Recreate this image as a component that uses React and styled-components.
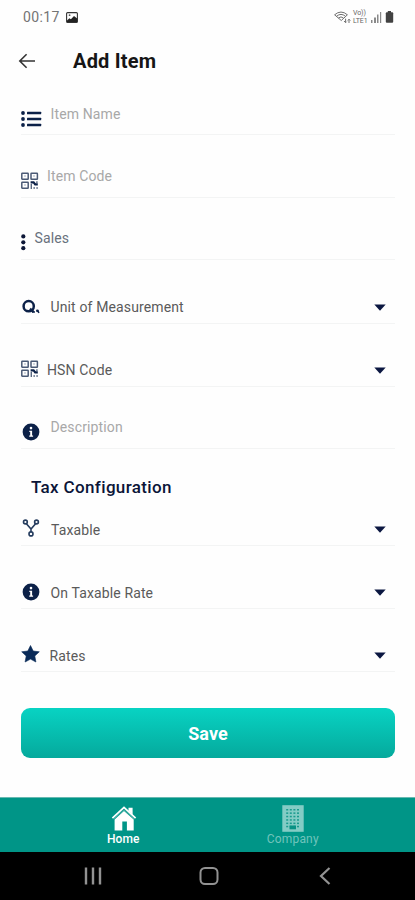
import React from "react";
import styled, { createGlobalStyle } from "styled-components";

const GlobalStyle = createGlobalStyle`
  * { box-sizing: border-box; }
  body { margin: 0; background: #fefefe; font-family: Roboto, sans-serif; }
  svg { flex: none; }
`;

const Screen = styled.div`
  display: flex;
  flex-direction: column;
  height: 900px;
  background: #fefefe;
  overflow: hidden;
`;

const StatusBar = styled.div`
  display: flex;
  align-items: center;
  height: 34px;
  padding: 0 21px 0 23px;
`;

const Clock = styled.span`
  width: 38px;
  margin-right: 5px;
  font-size: 14px;
  letter-spacing: 0.35px;
  color: #747474;
  white-space: nowrap;
`;

const StatusIcons = styled.div`
  display: flex;
  align-items: center;
  gap: 2px;
  margin-left: auto;
`;

const NetworkLabel = styled.span`
  display: flex;
  flex-direction: column;
  width: 15px;
  font-size: 7px;
  line-height: 8px;
  letter-spacing: -0.1px;
  color: #666;
`;

const AppBar = styled.header`
  display: flex;
  align-items: center;
  height: 54px;
  padding: 0 18px;
`;

const BackButton = styled.button`
  display: flex;
  width: 55px;
  padding: 0;
  border: 0;
  background: none;
`;

const Title = styled.h1`
  margin: 0 0 1px;
  font-size: 20px;
  font-weight: 700;
  letter-spacing: 0.2px;
  color: #161616;
`;

const Form = styled.form`
  display: flex;
  flex-direction: column;
  flex: 1;
  padding: 0 20px 0 21px;
`;

const Field = styled.div`
  display: flex;
  align-items: flex-end;
  height: ${(p) => p.$height}px;
  border-bottom: 1px solid #f3f4f4;
`;

const IconSlot = styled.div`
  display: flex;
  align-items: center;
  width: ${(p) => p.$width}px;
  height: 20px;
  margin-bottom: ${(p) => p.$lift}px;
`;

const Label = styled.span`
  flex: 1;
  margin-bottom: ${(p) => p.$lift}px;
  font-size: 14px;
  line-height: 20px;
  letter-spacing: 0.13px;
  color: ${(p) => p.$color};
`;

const Caret = styled.svg`
  width: 12px;
  height: 7px;
  margin: 0 9px 12px 0;
  fill: #0b1741;
`;

const SectionTitle = styled.h2`
  height: 50px;
  margin: 0;
  padding: 26px 0 0 10px;
  font-size: 17px;
  line-height: 24px;
  font-weight: 500;
  letter-spacing: 0.35px;
  color: #0b1538;
`;

const SaveButton = styled.button`
  height: 50px;
  margin-top: 36px;
  border: 0;
  border-radius: 9px;
  background: linear-gradient(#08d3c3, #05a99c);
  color: #fff;
  font: 700 18px Roboto, sans-serif;
  letter-spacing: 0.1px;
`;

const TabBar = styled.nav`
  display: grid;
  grid-template-columns: 1fr 1fr;
  height: 55px;
  padding: 0 37px 0 39px;
  border-top: 1px solid #68b9b1;
  background: #009587;
`;

const Tab = styled.div`
  display: flex;
  flex-direction: column;
  align-items: center;
  padding-top: 7px;
  color: ${(p) => (p.$active ? "#fff" : "#70c4bc")};
`;

const TabLabel = styled.span`
  margin: ${(p) => (p.$active ? 1 : 0)}px 1px 0 0;
  font-size: 12px;
  line-height: 14px;
  font-weight: ${(p) => (p.$active ? 500 : 400)};
  letter-spacing: ${(p) => (p.$active ? 0.1 : 0.2)}px;
`;

const SystemBar = styled.div`
  display: grid;
  grid-template-columns: repeat(3, 116px);
  justify-content: center;
  align-items: center;
  justify-items: center;
  height: 48px;
  padding-left: 3px;
  background: #000;
`;

const NAVY = "#0c2148";

const ListIcon = () => (
  <svg width="21" height="16" viewBox="0 0 21 16" fill={NAVY}>
    {[2, 8, 14].map((y) => (
      <g key={y}>
        <circle cx="2" cy={y} r="1.9" />
        <rect x="6" y={y - 1.2} width="14.2" height="2.4" rx="0.5" />
      </g>
    ))}
  </svg>
);

const CodeIcon = () => (
  <svg width="18" height="18" viewBox="0 0 18 18" fill="none" stroke="#4b5a75" strokeWidth="1.5">
    <rect x=".8" y="1.2" width="6.4" height="6" rx=".5" />
    <rect x="10" y="1.2" width="6.4" height="6" rx=".5" />
    <rect x=".8" y="10.2" width="6.4" height="6" rx=".5" />
    <path d="M3 4h2M12 4h2M3 13h2" strokeWidth="1" stroke="#a7b0bf" />
    <path d="M9.6 10.4h3l1.6 2h2.6" stroke={NAVY} strokeWidth="2.2" />
    <path d="M15.9 9.2v2M10.3 12v4.9M12.4 16h1.6M15.3 16h1.6" stroke="#586781" strokeWidth="1.4" />
  </svg>
);

const DotsIcon = () => (
  <svg width="5" height="17" viewBox="0 0 5 17" fill="#0d1737">
    <circle cx="2.3" cy="2.4" r="2.1" />
    <circle cx="2.3" cy="8.3" r="2.1" />
    <circle cx="2.3" cy="14.2" r="2.1" />
  </svg>
);

const MeasureIcon = () => (
  <svg width="20" height="16" viewBox="0 0 20 16" fill="none" stroke={NAVY}>
    <circle cx="7.7" cy="7.2" r="5.1" strokeWidth="2.5" />
    <path d="M9 9.6l3.7 3.5" strokeWidth="2.3" />
    <path d="M11 13h3" strokeWidth="1.4" />
    <circle cx="16.4" cy="11.8" r="1.4" fill={NAVY} stroke="none" />
    <path d="M17 11.8l.9 2.2" strokeWidth="1.4" />
  </svg>
);

const InfoIcon = () => (
  <svg width="20" height="18" viewBox="0 0 20 18">
    <circle cx="10" cy="9" r="8.4" fill={NAVY} />
    <circle cx="10" cy="5.1" r="1.3" fill="#fff" />
    <path d="M8.3 7.8h2.8v4.6h1v1.4H8.2v-1.4h1V9.1h-.9z" fill="#fff" />
  </svg>
);

const ForkIcon = () => (
  <svg width="20" height="18" viewBox="0 0 20 18" fill="none" stroke="#253c5e" strokeWidth="1.6">
    <circle cx="4.4" cy="3" r="1.9" />
    <circle cx="15.5" cy="3" r="1.9" />
    <circle cx="10" cy="14.9" r="2" />
    <path d="M5.4 4.8L10 10.1l4.6-5.3M10 9.5V13" />
  </svg>
);

const StarIcon = () => (
  <svg width="20" height="18" viewBox="0 0 20 18">
    <path d="M9.5.5l2.7 5.5 6.1.8-4.5 4.2 1.1 6-5.4-2.9L4.1 17l1.1-6L.7 6.8 6.8 6z" fill="#092a58" stroke="#092a58" strokeWidth=".6" strokeLinejoin="round" />
  </svg>
);

const PictureIcon = () => (
  <svg width="12" height="11" viewBox="0 0 12 11">
    <rect x=".6" y=".6" width="10.8" height="9.8" rx="1" fill="#fff" stroke="#333" strokeWidth="1.1" />
    <path d="M1 8.5l2.4-2.3 1.5 1.1L8 4.1l3.2 2.5V10H1z" fill="#222" />
    <circle cx="3.6" cy="3.2" r=".9" fill="#555" />
  </svg>
);

const WifiIcon = () => (
  <svg width="17" height="13" viewBox="0 0 17 13" fill="none" stroke="#707070">
    <path d="M.6 3.8Q7 -1.7 13.4 3.8L7.3 9.5zM2.6 5.2Q7 1.6 11.4 5.2M4.5 7Q7 4.8 9.4 7" />
    <path d="M11.6 7.7v3.7M10 10l1.6 1.7 1-1M15 12V8.5M13.8 9.5L15 8.2l1.3 1.3" />
  </svg>
);

const SignalIcon = () => (
  <svg width="13" height="12" viewBox="0 0 13 12" fill="#898989">
    <rect x="1" y="9" width="1.5" height="3" />
    <rect x="4" y="6.5" width="2" height="5.5" />
    <rect x="7" y="3.5" width="1.5" height="8.5" />
    <rect x="10" y="1" width="1.2" height="11" />
  </svg>
);

const BatteryIcon = () => (
  <svg width="9" height="12" viewBox="0 0 9 12" fill="#424242">
    <rect x="2.8" y="0" width="3.2" height="2" />
    <rect x=".8" y="1.2" width="7.4" height="10.6" rx="1" />
  </svg>
);

const BackArrow = () => (
  <svg width="18" height="16" viewBox="0 0 18 16" fill="none" stroke="#333" strokeWidth="1.6">
    <path d="M17 8H2M8.6 1.2L1.8 8l6.8 6.8" />
  </svg>
);

const HomeIcon = () => (
  <svg width="26" height="26" viewBox="0 0 26 26" fill="#fff">
    <path d="M3.6 14.4L13 6l9.7 8.4V25.6h-6.8v-9h-4.6v9H3.6z" />
    <path d="M1.4 13.2L13 2.4l11.6 10.8" fill="none" stroke="#fff" strokeWidth="1.8" />
    <path d="M2.8 14L13 4.8 23.2 14" fill="none" stroke="#7cc8c1" strokeWidth=".6" />
    <path d="M17.5 2.7h4.1v7.2l-4.1-3.8z" />
  </svg>
);

const CompanyIcon = () => (
  <svg width="22" height="27" viewBox="0 0 22 27">
    <rect x=".3" y=".2" width="21.4" height="26.6" fill="#83ccc5" />
    {[4, 7.4, 10.8, 14.2, 17.6, 20.8].map((y) =>
      [4.2, 7.8, 11.4, 15].map((x) => (
        <rect key={`${x}-${y}`} x={x} y={y} width="2" height="1.5" fill="#1a9b8e" />
      ))
    )}
    <rect x="7.5" y="20.5" width="6.5" height="3.8" fill="#079184" />
  </svg>
);

const MUTED = "#a8a8a8";
const DARK = "#5a5a5a";

const itemFields = [
  { label: "Item Name", Icon: ListIcon, width: 29.5, height: 47, iconLift: 5, lift: 10, color: MUTED },
  { label: "Item Code", Icon: CodeIcon, width: 26, height: 63, iconLift: 6, lift: 11, color: MUTED },
  { label: "Sales", Icon: DotsIcon, width: 13.5, height: 62, iconLift: 7, lift: 11, color: "#68717d" },
  { label: "Unit of Measurement", Icon: MeasureIcon, width: 29.5, height: 64, iconLift: 6, lift: 6, color: DARK, select: true },
  { label: "HSN Code", Icon: CodeIcon, width: 26, height: 63, iconLift: 7, lift: 6, color: DARK, select: true },
  { label: "Description", Icon: InfoIcon, width: 29.5, height: 62, iconLift: 6, lift: 11, color: MUTED },
];

const taxFields = [
  { label: "Taxable", Icon: ForkIcon, width: 30, height: 47, iconLift: 7, lift: 5, color: DARK, select: true },
  { label: "On Taxable Rate", Icon: InfoIcon, width: 29.5, height: 63, iconLift: 6, lift: 5, color: DARK, select: true },
  { label: "Rates", Icon: StarIcon, width: 28.5, height: 63, iconLift: 7, lift: 5, color: DARK, select: true },
];

const FormField = ({ label, Icon, width, height, iconLift, lift, color, select }) => (
  <Field $height={height}>
    <IconSlot $width={width} $lift={iconLift}>
      <Icon />
    </IconSlot>
    <Label $lift={lift} $color={color}>{label}</Label>
    {select && (
      <Caret viewBox="0 0 12 7">
        <path d="M.3.5h11.4L6 6.7z" />
      </Caret>
    )}
  </Field>
);

export default function App() {
  return (
    <Screen>
      <GlobalStyle />
      <StatusBar>
        <Clock>00:17</Clock>
        <PictureIcon />
        <StatusIcons>
          <WifiIcon />
          <NetworkLabel>
            <span>Vo))</span>
            <span>LTE1</span>
          </NetworkLabel>
          <SignalIcon />
          <BatteryIcon />
        </StatusIcons>
      </StatusBar>
      <AppBar>
        <BackButton type="button" aria-label="Back">
          <BackArrow />
        </BackButton>
        <Title>Add Item</Title>
      </AppBar>
      <Form>
        {itemFields.map((f) => <FormField key={f.label} {...f} />)}
        <SectionTitle>Tax Configuration</SectionTitle>
        {taxFields.map((f) => <FormField key={f.label} {...f} />)}
        <SaveButton type="button">Save</SaveButton>
      </Form>
      <TabBar>
        <Tab $active>
          <HomeIcon />
          <TabLabel $active>Home</TabLabel>
        </Tab>
        <Tab>
          <CompanyIcon />
          <TabLabel>Company</TabLabel>
        </Tab>
      </TabBar>
      <SystemBar>
        <svg width="18" height="18" viewBox="0 0 18 18" stroke="#929292" strokeWidth="2.4">
          <path d="M2 .5v17M9 .5v17M16 .5v17" />
        </svg>
        <svg width="20" height="20" viewBox="0 0 20 20" fill="none" stroke="#929292" strokeWidth="2">
          <rect x="1.5" y="2" width="17" height="16" rx="4.5" />
        </svg>
        <svg width="12" height="18" viewBox="0 0 12 18" fill="none" stroke="#929292" strokeWidth="2.2">
          <path d="M10.5 1L2 9l8.5 8" />
        </svg>
      </SystemBar>
    </Screen>
  );
}
